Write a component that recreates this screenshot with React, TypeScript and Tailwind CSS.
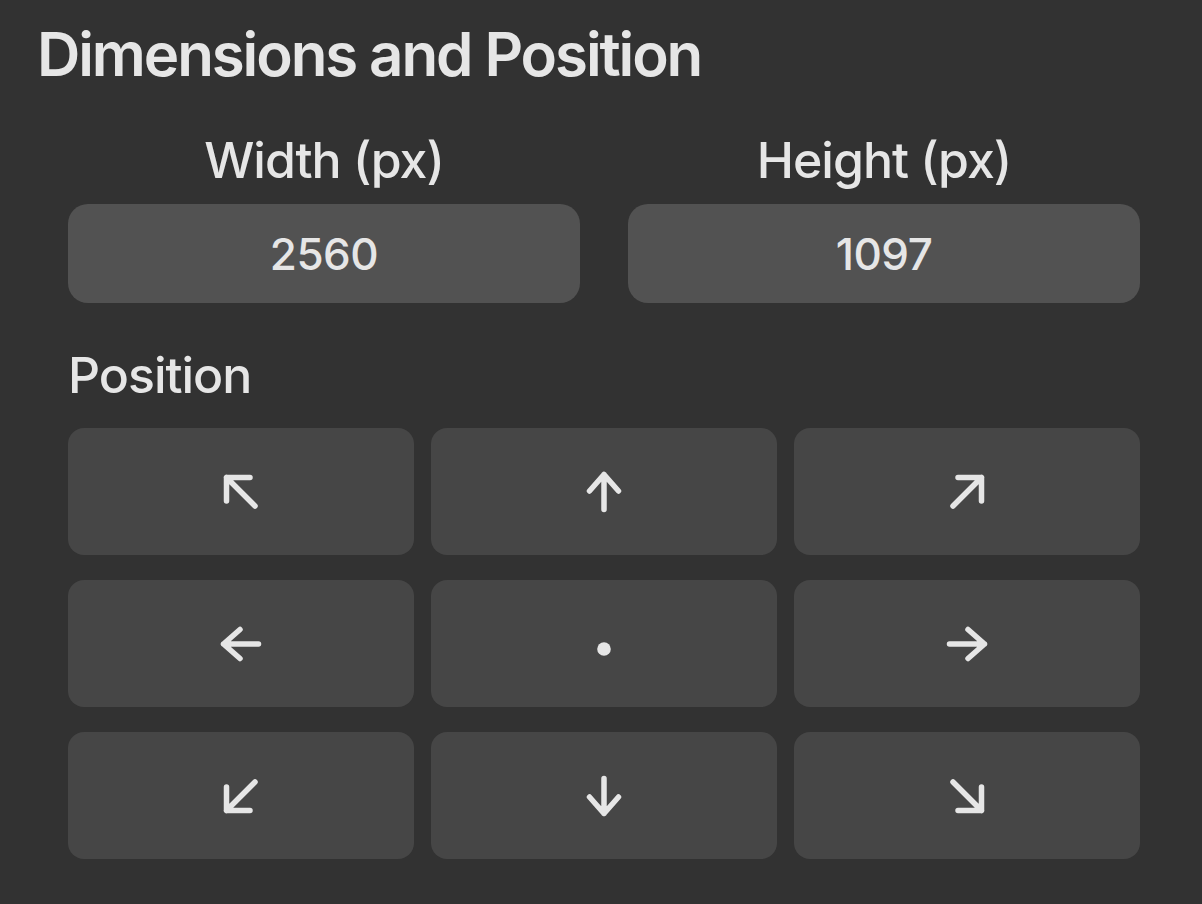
import React from "react";

type Dir = "nw" | "n" | "ne" | "w" | "c" | "e" | "sw" | "s" | "se";

// Arrow glyphs drawn in a 48x48 box, stroked with round caps.
function ArrowIcon({ dir }: { dir: Dir }) {
  const common = {
    fill: "none",
    stroke: "#e6e6e6",
    strokeWidth: 5.5,
    strokeLinecap: "round" as const,
    strokeLinejoin: "round" as const,
  };
  let body: React.ReactNode = null;
  switch (dir) {
    case "n":
      body = <path d="M24 6.5V41.5M9.5 23L24 6.5L38.5 23" {...common} />;
      break;
    case "s":
      body = <path d="M24 6.5V41.5M9.5 25L24 41.5L38.5 25" {...common} />;
      break;
    case "e":
      body = <path d="M6.5 24H41.5M25 9.5L41.5 24L25 38.5" {...common} />;
      break;
    case "w":
      body = <path d="M6.5 24H41.5M23 9.5L6.5 24L23 38.5" {...common} />;
      break;
    case "nw":
      body = <path d="M9.5 9.5L38 38M9.5 9.5H33M9.5 9.5V33" {...common} />;
      break;
    case "ne":
      body = <path d="M38.5 9.5L10 38M38.5 9.5H15M38.5 9.5V33" {...common} />;
      break;
    case "sw":
      body = <path d="M9.5 38.5L38 10M9.5 38.5H33M9.5 38.5V15" {...common} />;
      break;
    case "se":
      body = <path d="M38.5 38.5L10 10M38.5 38.5H15M38.5 38.5V15" {...common} />;
      break;
    case "c":
      body = <circle cx="24" cy="29" r="6.8" fill="#e6e6e6" />;
      break;
  }
  return (
    <svg width="48" height="48" viewBox="0 0 48 48" aria-hidden="true">
      {body}
    </svg>
  );
}

const positions: Dir[] = ["nw", "n", "ne", "w", "c", "e", "sw", "s", "se"];

function SizeField({ label, value }: { label: string; value: string }) {
  return (
    <div className="flex flex-col">
      <div className="text-center text-[50px] leading-[60px] font-medium tracking-[-1px] text-[#e6e6e6]">
        {label}
      </div>
      <div className="mt-[14px] flex h-[99px] items-center justify-center rounded-[20px] bg-[#525252] text-[44px] font-medium tracking-[-0.5px] text-[#e6e6e6]">
        {value}
      </div>
    </div>
  );
}

export default function App() {
  return (
    <div
      className="min-h-[904px] w-full bg-[#323232] text-[#e6e6e6]"
      style={{ fontFamily: "Inter, 'Noto Sans', sans-serif" }}
    >
      <div className="pl-[37px] pt-[18px]">
        <h1 className="text-[60px] leading-[72px] font-semibold tracking-[-2.1px]">
          Dimensions and Position
        </h1>
      </div>

      <div className="ml-[68px] w-[1072px]">
        <div className="mt-[40px] grid grid-cols-2 gap-x-[48px]">
          <SizeField label="Width (px)" value="2560" />
          <SizeField label="Height (px)" value="1097" />
        </div>

        <div className="mt-[42px] text-[50px] leading-[60px] font-medium tracking-[-1px]">
          Position
        </div>

        <div className="mt-[23px] grid grid-cols-3 gap-x-[17px] gap-y-[25px]">
          {positions.map((d) => (
            <button
              key={d}
              type="button"
              className="flex h-[127px] items-center justify-center rounded-[16px] bg-[#464646]"
            >
              <ArrowIcon dir={d} />
            </button>
          ))}
        </div>
      </div>
    </div>
  );
}
